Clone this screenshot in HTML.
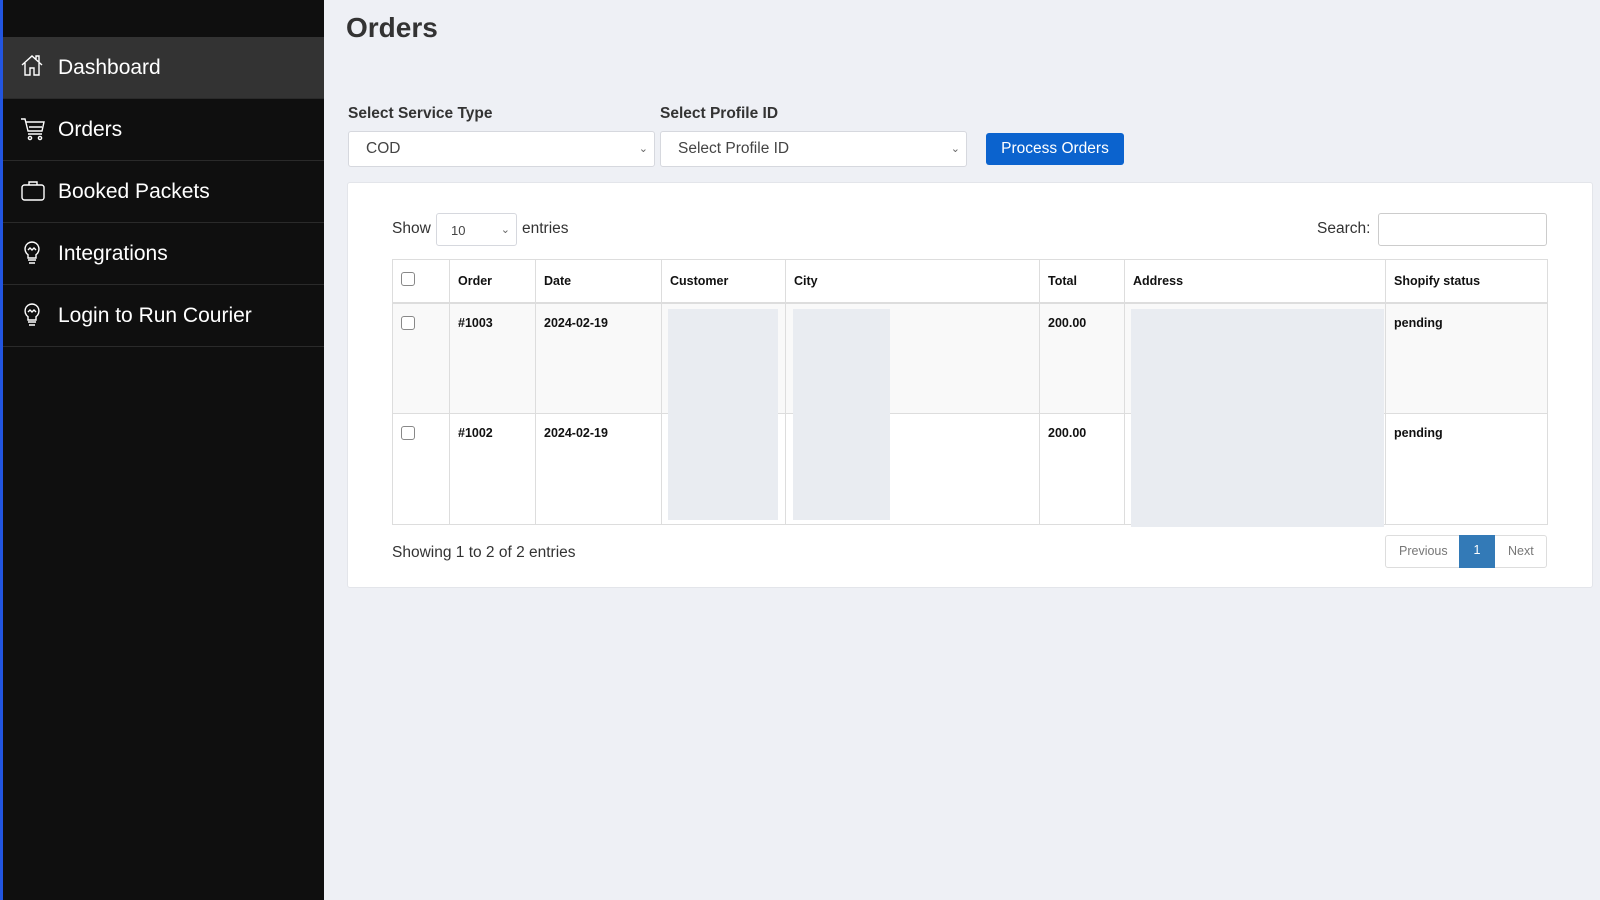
<!DOCTYPE html>
<html><head><meta charset="utf-8"><style>
*{box-sizing:border-box;margin:0;padding:0}
body{width:1600px;height:900px;background:#eef0f5;font-family:"Liberation Sans",sans-serif;position:relative;overflow:hidden;color:#333}
.sb{position:absolute;left:0;top:0;width:324px;height:900px;background:#0f0f0f;border-left:3px solid #2255e0}
.it{position:absolute;left:0;width:321px;height:62px;border-bottom:1px solid #2a2a2a;color:#fff;font-size:21px;line-height:62px;padding-left:55px}
.it svg{position:absolute;left:16px;top:16px}
.act{background:#333}
.a{position:absolute}
h1{position:absolute;left:346px;top:12px;font-size:28px;font-weight:bold;color:#333}
.lbl{font-size:15.5px;font-weight:bold;color:#333}
.sel{background:#fff;border:1px solid #d6d8de;border-radius:3px;font-size:15.5px;color:#444;padding-left:17px;line-height:34px}
.chev{position:absolute;right:6px;top:0;font-size:11px;color:#666}
.card{position:absolute;left:347px;top:182px;width:1246px;height:406px;background:#fff;border:1px solid #e3e5ea;border-radius:3px}
table{position:absolute;left:392px;top:259px;border-collapse:collapse;font-size:12.5px;font-weight:bold;color:#111}
td,th{border:1px solid #ddd;text-align:left;vertical-align:top;padding:0 8px}
th{height:43px;vertical-align:middle;border-bottom:2px solid #ddd}
td{height:111px;padding-top:12px}
.cb{display:inline-block;width:14px;height:14px;border:1px solid #888;border-radius:3px;background:#fff}
.g{position:absolute;background:#e9ecf1}
</style></head><body>
<div class="sb">
 <div class="it act" style="top:37px"><svg width="26" height="26" viewBox="0 0 26 26" fill="none" stroke="#fff" stroke-width="1.4"><path d="M3 12L13 3l10 9M6 10v12h5v-7h4v7h5V10M17 6V3h3v6"/></svg>Dashboard</div>
 <div class="it" style="top:99px"><svg width="28" height="28" viewBox="0 0 28 28" fill="none" stroke="#fff" stroke-width="1.4"><path d="M2 4h4l3 12h14l2-9H7M10 12h13M9 19h14"/><circle cx="11" cy="23" r="1.6"/><circle cx="21" cy="23" r="1.6"/></svg>Orders</div>
 <div class="it" style="top:161px"><svg width="28" height="28" viewBox="0 0 28 28" fill="none" stroke="#fff" stroke-width="1.4"><rect x="3" y="8" width="22" height="15" rx="2.5"/><path d="M10 8V5h8v3"/></svg>Booked Packets</div>
 <div class="it" style="top:223px"><svg width="26" height="28" viewBox="0 0 26 28" fill="none" stroke="#fff" stroke-width="1.4"><path d="M13 3a7 7 0 0 0-4 12.7V19h8v-3.3A7 7 0 0 0 13 3zM9 21h8M10 24h6M9 11l2-2 2 2 2-2 2 2"/></svg>Integrations</div>
 <div class="it" style="top:285px"><svg width="26" height="28" viewBox="0 0 26 28" fill="none" stroke="#fff" stroke-width="1.4"><path d="M13 3a7 7 0 0 0-4 12.7V19h8v-3.3A7 7 0 0 0 13 3zM9 21h8M10 24h6M9 11l2-2 2 2 2-2 2 2"/></svg>Login to Run Courier</div>
</div>
<h1>Orders</h1>
<div class="a lbl" style="left:348px;top:105px">Select Service Type</div>
<div class="a lbl" style="left:660px;top:105px">Select Profile ID</div>
<div class="a sel" style="left:348px;top:131px;width:307px;height:36px">COD<span class="chev">&#8964;</span></div>
<div class="a sel" style="left:660px;top:131px;width:307px;height:36px">Select Profile ID<span class="chev">&#8964;</span></div>
<div class="a" style="left:986px;top:133px;width:138px;height:32px;background:#0b63ce;border-radius:3px;color:#fff;font-size:15.5px;line-height:32px;text-align:center">Process Orders</div>
<div class="card"></div>
<div class="a" style="left:392px;top:220px;font-size:15.5px">Show</div>
<div class="a sel" style="left:436px;top:213px;width:81px;height:33px;font-size:13px;padding-left:14px;line-height:33px">10<span class="chev">&#8964;</span></div>
<div class="a" style="left:522px;top:220px;font-size:15.5px">entries</div>
<div class="a" style="left:1317px;top:220px;font-size:15.5px">Search:</div>
<div class="a" style="left:1378px;top:213px;width:169px;height:33px;border:1px solid #ccc;border-radius:3px;background:#fff"></div>
<table>
<tr><th style="width:57px"><span class="cb"></span></th><th style="width:86px">Order</th><th style="width:126px">Date</th><th style="width:124px">Customer</th><th style="width:254px">City</th><th style="width:85px">Total</th><th style="width:261px">Address</th><th style="width:162px">Shopify status</th></tr>
<tr style="background:#f9f9f9"><td><span class="cb"></span></td><td>#1003</td><td>2024-02-19</td><td></td><td></td><td>200.00</td><td></td><td>pending</td></tr>
<tr><td><span class="cb"></span></td><td>#1002</td><td>2024-02-19</td><td></td><td></td><td>200.00</td><td></td><td>pending</td></tr>
</table>
<div class="g" style="left:668px;top:309px;width:110px;height:211px"></div>
<div class="g" style="left:793px;top:309px;width:97px;height:211px"></div>
<div class="g" style="left:1131px;top:309px;width:253px;height:218px"></div>
<div class="a" style="left:392px;top:544px;font-size:15.5px">Showing 1 to 2 of 2 entries</div>
<div class="a" style="left:1385px;top:535px;width:162px;height:33px;border:1px solid #ddd;border-radius:3px;background:#fff;font-size:12.5px;color:#777;line-height:31px">
 <span class="a" style="left:13px">Previous</span>
 <span class="a" style="left:73px;top:-1px;width:36px;height:33px;background:#337ab7;color:#fff;text-align:center">1</span>
 <span class="a" style="left:122px">Next</span>
</div>
</body></html>
